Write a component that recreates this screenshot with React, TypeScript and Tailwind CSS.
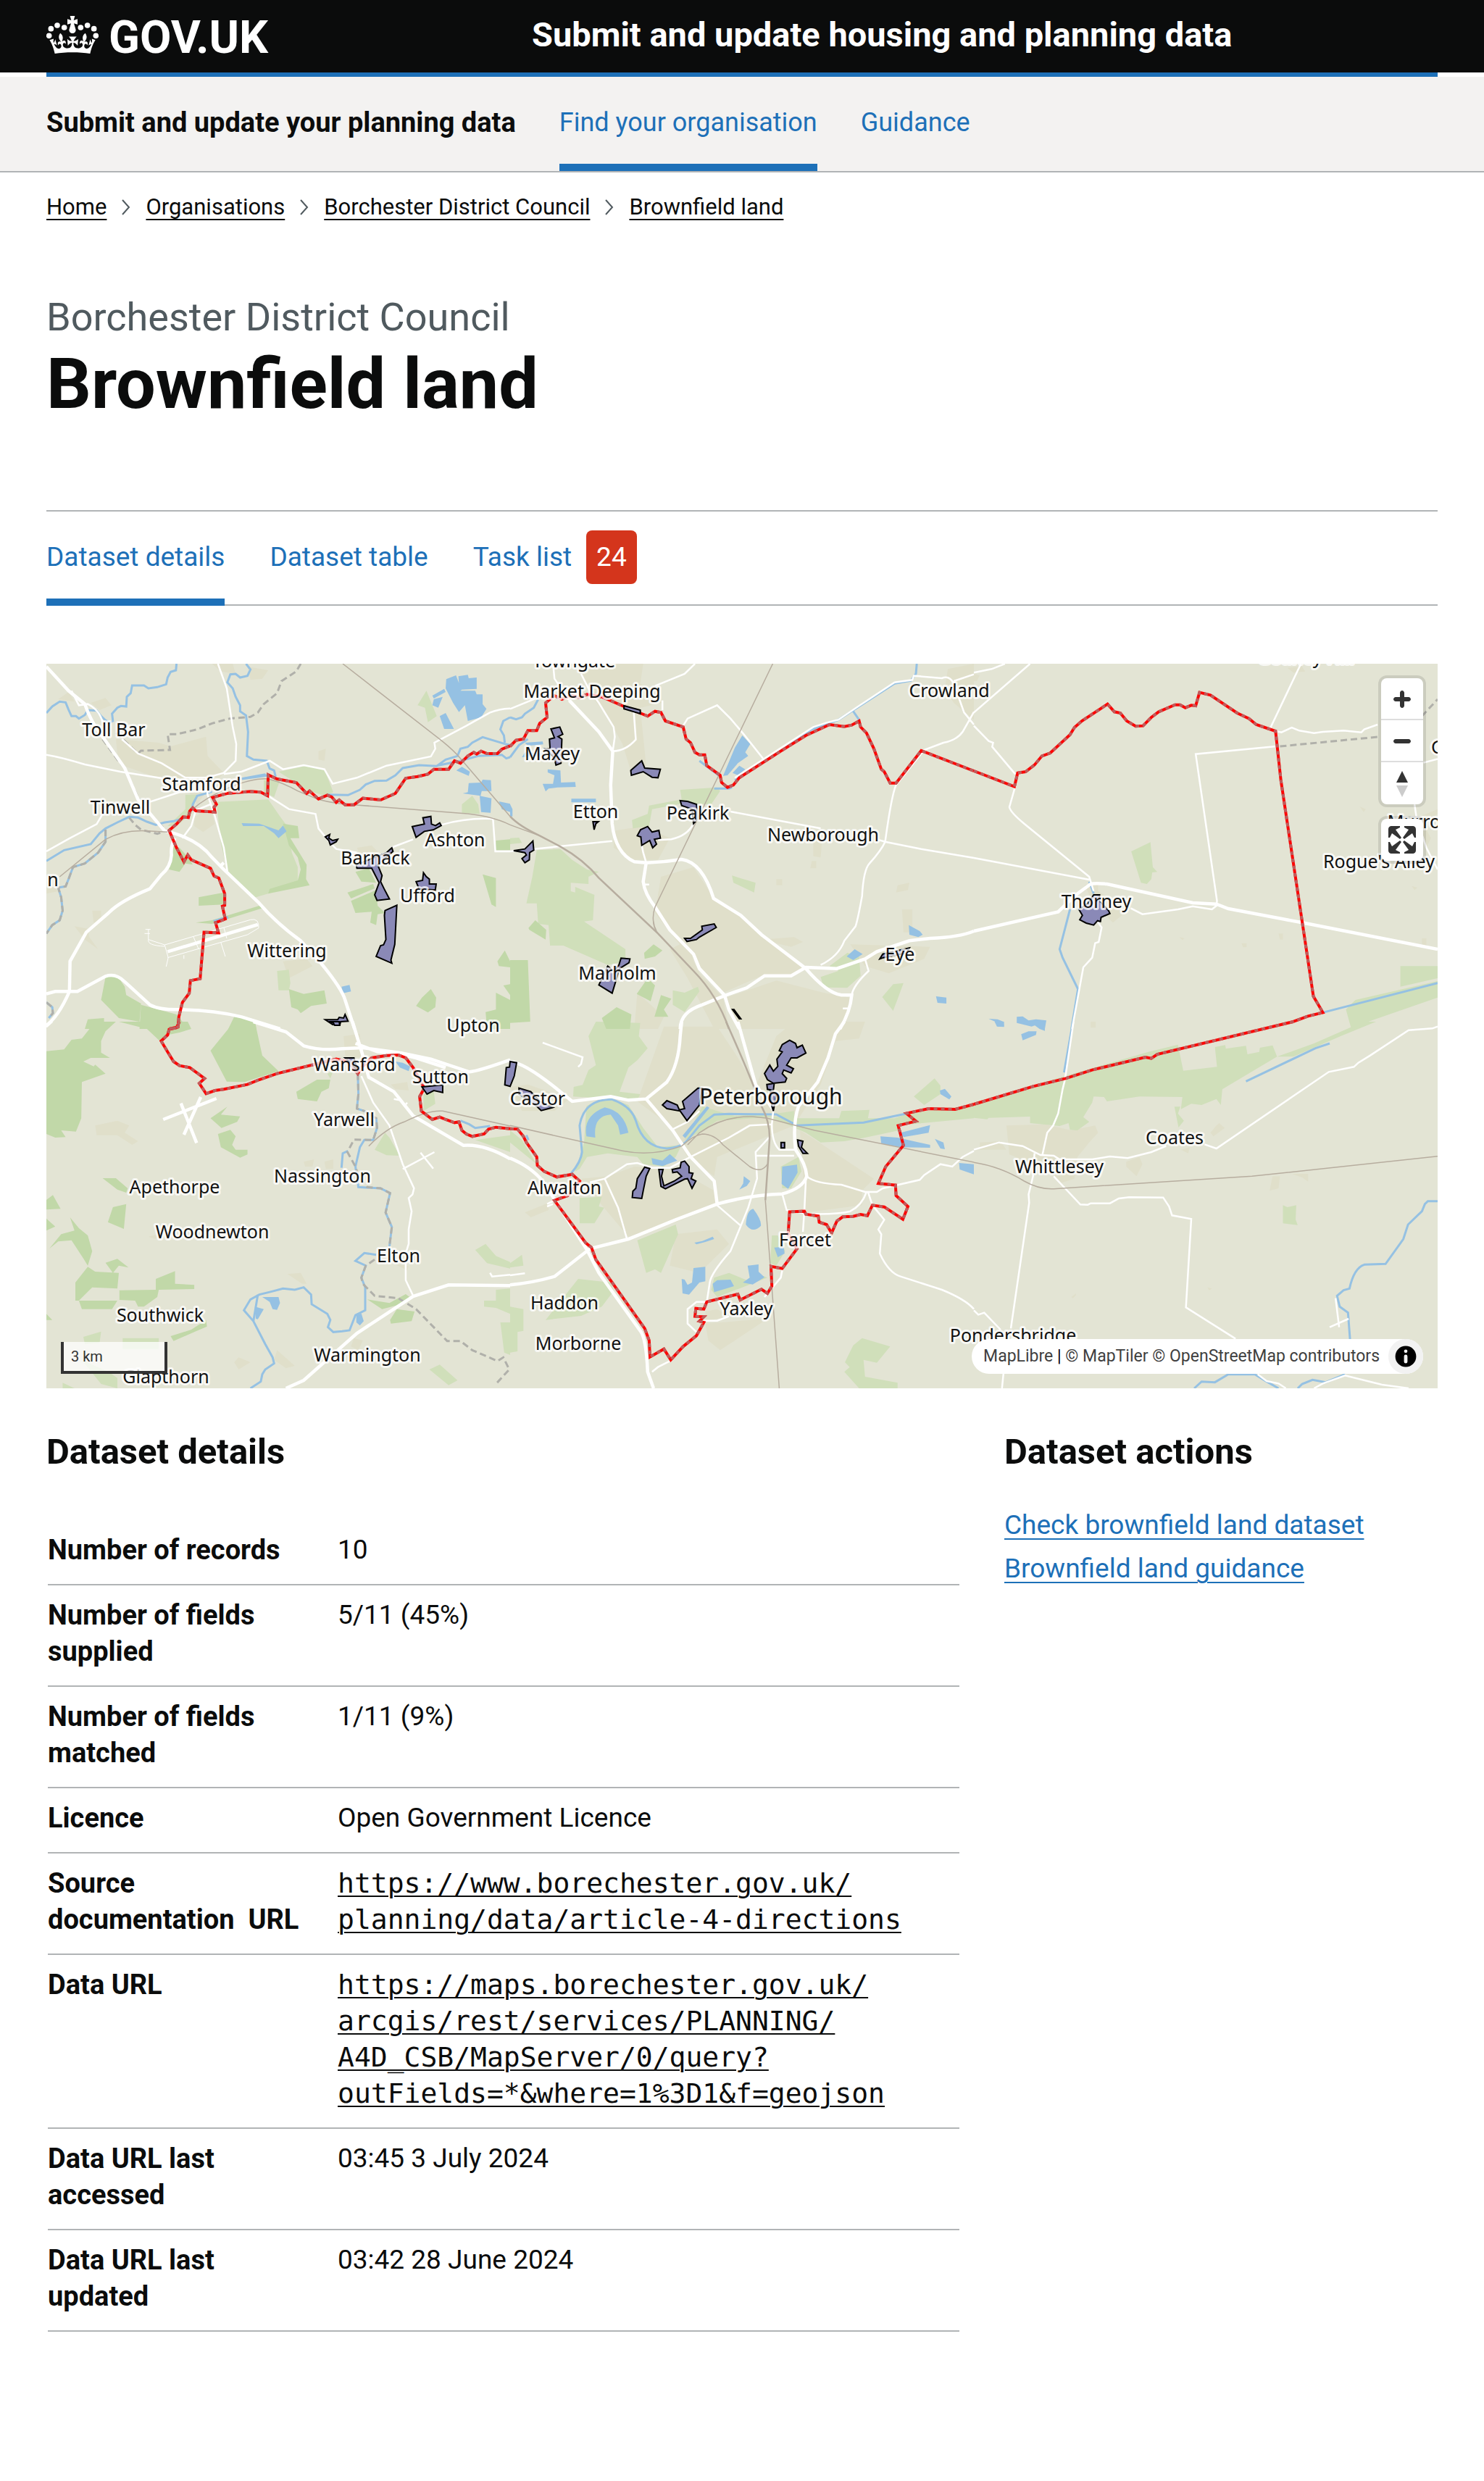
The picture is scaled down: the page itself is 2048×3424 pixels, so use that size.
import type { ReactNode } from "react";

/* ---------- shared ---------- */

const WRAP = "px-16";
const H2 = "text-[49px] leading-[60px] font-bold";

/* ---------- header ---------- */

function Crown() {
  return (
    <svg viewBox="24 24 216 156" className="h-[52px] w-[72px]" fill="currentColor" aria-hidden="true">
      {[[35, 106], [43, 77], [69, 63], [98, 72], [166, 72], [194, 63], [221, 77], [229, 106]].map(([x, y]) => (
        <circle key={x} cx={x} cy={y} r="11.5" />
      ))}
      <path d="M122 24h20l-5 18 16-5v22l-15-4 8 27a14 14 0 1 1-28 0l8-27-15 4V37l16 5z" />
      <path
        transform="matrix(5.94 0 0 6.36 37 -10.8)"
        d="M16 29.2c4.4 0 8.6.3 12.3.8 1.1-4.5 2.4-7 3.7-8.8l-2.5-.9c.2 1.3.3 1.9 0 2.7-.4-.4-.8-1.1-1.1-2.3l-1.2 4c.7-.5 1.3-.8 2-.9-1.1 2.5-2.6 3.1-3.5 3-1.1-.2-1.7-1.2-1.5-2.1.3-1.2 1.5-1.5 2.1-.1 1.1-2.3-.8-3-2-2.3 1.9-1.9 2.1-3.5.6-5.6-2.1 1.6-2.1 3.2-1.2 5.5-1.2-1.4-3.2-.6-2.5 1.6.9-1.4 2.1-.5 1.9.8-.2 1.1-1.7 2.1-3.5 1.9-2.7-.2-2.9-2.1-2.9-3.6.7-.1 1.9.5 2.9 1.9l.4-4.3c-1.1 1.1-2.1 1.4-3.2 1.4.4-1.2 2.1-3 2.1-3h-5.4s1.7 1.9 2.1 3c-1.1 0-2.1-.2-3.2-1.4l.4 4.3c1-1.4 2.2-2 2.9-1.9-.1 1.5-.2 3.4-2.9 3.6-1.9.2-3.4-.8-3.5-1.9-.2-1.3 1-2.2 1.9-.8.7-2.3-1.2-3-2.5-1.6.9-2.2.9-3.9-1.2-5.5-1.5 2-1.3 3.7.6 5.6-1.2-.7-3.1 0-2 2.3.6-1.4 1.8-1.1 2.1.1.2.9-.3 1.9-1.5 2.1-.9.2-2.4-.5-3.5-3 .6 0 1.2.3 2 .9l-1.2-4c-.3 1.1-.7 1.9-1.1 2.3-.3-.8-.2-1.4 0-2.7L0 21.2c1.3 1.8 2.6 4.3 3.7 8.8 3.7-.5 7.9-.8 12.3-.8"
      />
    </svg>
  );
}

function Header() {
  return (
    <header>
      <div className={`flex h-[100px] items-center bg-[#0b0c0c] pb-1 text-white ${WRAP}`}>
        <a href="#" className="flex w-[670px] shrink-0 items-center gap-[14px]">
          <Crown />
          <span className="pt-1.5 text-[63px] leading-none font-bold">GOV.UK</span>
        </a>
        <a href="#" className="text-[47px] leading-[60px] font-bold">Submit and update housing and planning data</a>
      </div>
      <div className={WRAP}>
        <div className="h-1.5 bg-[#1d70b8]" />
      </div>
      <nav aria-label="Service" className={`flex gap-[60px] border-b-2 border-[#b1b4b6] bg-[#f3f2f1] ${WRAP}`}>
        <a href="#" className="h-[130px] pt-[38px] text-[38px] leading-[50px] font-bold">Submit and update your planning data</a>
        <a href="#" aria-current="page" className="h-[130px] border-b-10 border-[#1d70b8] pt-[38px] text-[36px] leading-[50px] text-[#1d70b8]">Find your organisation</a>
        <a href="#" className="h-[130px] pt-[38px] text-[36px] leading-[50px] text-[#1d70b8]">Guidance</a>
      </nav>
    </header>
  );
}

function Breadcrumbs() {
  const items = ["Home", "Organisations", "Borchester District Council", "Brownfield land"];
  return (
    <nav aria-label="Breadcrumb" className="mt-7">
      <ol className="flex items-center text-[31px] leading-10">
        {items.map((t, i) => (
          <li key={t} className="flex items-center">
            {i > 0 && (
              <svg viewBox="0 0 12 22" className="mx-[21px] h-[22px] w-3" fill="none" stroke="#505a5f" strokeWidth="2" aria-hidden="true">
                <path d="M1 1l9 10-9 10" />
              </svg>
            )}
            <a href="#" className="underline decoration-2 underline-offset-[6px]">{t}</a>
          </li>
        ))}
      </ol>
    </nav>
  );
}

function Tabs() {
  const tab = "h-[130px] border-b-10 pt-1.5 flex items-center";
  return (
    <nav aria-label="Dataset" className="mt-[124px] flex h-[132px] gap-[62px] border-y-2 border-[#b1b4b6] text-[37px] leading-[50px] text-[#1d70b8]">
      <a href="#" aria-current="page" className={`${tab} border-[#1d70b8]`}>Dataset details</a>
      <a href="#" className={`${tab} border-transparent`}>Dataset table</a>
      <a href="#" className={`${tab} gap-5 border-transparent`}>
        Task list
        <span className="rounded-lg bg-[#d4351c] px-[14px] py-3 text-white">24</span>
      </a>
    </nav>
  );
}

/* ---------- map ---------- */

type Kind = "built" | "grass" | "wood" | "water" | "river" | "track" | "rail" | "railMain" | "minor" | "road" | "trunk" | "site" | "border";
type Sheet = { at: [number, number]; shapes: Partial<Record<Kind, string>> };

// Map sheets: three across, two down; each is drawn on its own 1568-unit wide grid.
const SHEETS: Sheet[] = [
  {
    at: [0, -6],
    shapes: {
      built: "M235 330L380 345 420 360 540 320 545 400 600 470 540 550 510 600 480 545 400 500 260 440 240 390ZM150 180L200 160 220 190 180 210ZM40 165L75 135 95 175ZM500 650L555 620 570 680 530 715 500 690ZM560 18H630L640 60 590 50ZM680 30L750 45 730 80 690 85ZM800 1250L880 1240 900 1270 820 1320ZM95 1105L140 1115 145 1150 175 1200 130 1160ZM155 1040H185V1090H160ZM1050 780L1100 770 1170 860 1080 860ZM920 380L945 370 940 420 920 415ZM0 920L40 960 0 970Z",
      grass: "M575 590L750 580 790 650 820 700 830 800 850 860 850 920 750 970 700 988 650 930 610 870 590 760ZM785 465L880 440 940 455 970 550 940 565 880 540 830 500ZM735 500L790 500 770 570 735 550ZM470 560L510 560 490 640 440 690 410 690 470 620ZM1255 190L1285 130 1320 235 1290 260 1280 200ZM1405 600L1440 565 1460 600 1465 640 1405 635ZM780 1290L820 1285 825 1340 820 1370 785 1370Z",
      wood: "M800 680L850 690 855 740 825 740 880 850 878 910 890 935 750 970 755 950 850 915 860 870 850 820 820 770ZM425 770L450 780 480 820 495 850 470 845 450 880 415 870ZM515 985L600 965 600 1015 515 1020ZM505 1090L560 1080 720 1020 735 1028 560 1095ZM200 1315L240 1310 265 1355 270 1390 320 1425 315 1500 245 1485 185 1410ZM320 1430L440 1470 480 1530 315 1530ZM140 1490L195 1485 195 1530 130 1530ZM635 1480L705 1495 710 1530H615ZM820 1365L870 1385 940 1370 948 1425 895 1435 860 1465 850 1450 828 1440ZM1045 880L1090 865 1115 925 1065 920ZM1018 965L1105 930 1110 948 1030 990ZM1030 1000L1115 955 1120 1020 1145 1050 1120 1055 1115 1100 1095 1090 1100 1045 1045 1050ZM1475 890L1520 905 1520 1025 1505 1015ZM1525 1250L1550 1205 1568 1250V1275L1530 1270ZM1250 1435L1270 1400 1300 1365 1318 1400 1315 1440 1290 1462ZM1520 1380L1568 1410V1530H1490L1485 1460 1520 1450ZM1520 750L1568 745V790H1520ZM1545 1350L1568 1345V1390Z",
      water: "M1352 82L1385 66 1395 98 1393 70 1425 64 1428 78 1455 75 1455 122 1405 125 1400 130 1450 130 1455 145 1475 145 1475 185 1488 205 1470 240 1425 255 1415 190 1395 218 1375 180 1350 120ZM1305 150L1345 122 1350 135 1310 162ZM1310 165L1340 155 1325 200 1305 190ZM1330 235L1350 222 1378 288 1345 288ZM1386 460L1405 445 1432 465 1428 482ZM1408 555L1425 550 1428 512 1470 510 1475 498 1503 500 1505 545 1472 545 1468 565 1440 560ZM1465 565L1505 575 1502 635 1470 632ZM1530 588L1568 598V632L1540 620ZM660 678L720 680 785 708 800 688 812 712 785 740 770 720 735 690 665 690ZM998 1355L1025 1348 1030 1375 1003 1382ZM563 1080L612 1062 616 1072 570 1092ZM660 490L740 472 745 484 670 496Z",
      river: "M0 222L20 195 45 175 65 178 75 208 85 235 100 235 110 245 130 230 140 210 170 212 185 235 200 252 215 262 225 255 222 225 240 200 252 193 270 195 272 155 285 140 290 108 330 108 345 120 375 115 405 103 410 75 420 52 438 45 440 18M675 18L690 42 680 68 655 75 640 60 622 62 612 95 630 120 640 155 655 190 655 215 675 232 682 300 678 400 700 415 745 420 755 452 770 460 775 485M660 495L750 480M492 628L495 600 510 565 560 548M470 655L430 670 400 675 370 685 340 672 310 655 280 652 240 675 200 700 180 720 150 765 60 790 0 835M200 705L200 755 175 800 130 845 90 860 75 910 65 940 40 945 50 985 55 1040 45 1080 20 1100 0 1135M0 1420L20 1440 22 1465 8 1485M950 560L1020 562 1060 540 1080 518 1110 503 1150 502 1180 480 1205 450 1260 438 1320 442 1350 415 1390 400 1400 370 1425 362 1440 345 1475 322 1550 350 1568 355M1550 345L1547 315 1535 290 1545 255 1568 240M1320 440L1400 420 1460 400 1540 395 1555 410 1568 405",
      track: "M190 330L240 415 265 450 320 600 405 710M860 18L845 50 795 90 780 140 735 185 715 220 690 238 620 245 560 265 510 290 440 310 410 310 418 375 320 378 310 390 228 295M280 655L300 685 320 705 375 722 405 710M200 705L200 755 175 800 130 845 90 860 75 910 65 940 40 945 50 985 55 1040 45 1080 20 1100 0 1135M0 1420L20 1440 22 1465 8 1485",
      rail: "M1002 18L1340 340Q1380 380 1400 410L1568 650M45 900L200 745Q260 705 340 710L410 715M490 625Q540 570 620 530 700 490 750 495 800 510 850 545L920 580Q980 600 1040 602L1400 637Q1500 645 1568 685",
      minor: "M345 1160L400 1182 690 1078Q720 1070 718 1112L680 1140 410 1235M345 1160Q340 1185 400 1188M405 1272L412 1235 400 1182M590 1172L605 1230M497 1148L515 1200M600 1110L610 1155M345 1160V1118M335 1118H352M332 1135H350M465 1225V1240",
      road: "M0 395Q50 405 130 435L250 465 390 492 480 500M85 130L110 190 140 185Q180 210 190 260M255 330L310 390 390 430 470 490 540 490M580 18L610 120 630 280 642 350 640 420 600 470 540 490 545 560 570 650 600 780 612 878M600 475L660 465 755 420 800 455 870 438 940 455 968 515 1050 490 1150 440 1300 402 1315 370 1312 345 1420 275 1500 220Q1530 205 1568 203M0 795L80 740 170 682 200 620M350 590L450 550 540 545M750 565L820 620 910 640 920 700 960 760 980 785 1050 800M1165 780L1240 745M1335 685Q1420 655 1510 660L1518 795H1568M555 600L505 625 490 690 460 740",
      trunk: "M0 30L75 130 130 185Q150 260 190 320L265 450 310 580 400 710Q510 740 560 820L600 870 720 1010Q780 1095 860 1165L930 1260Q1000 1365 1010 1410L1042 1530M435 740Q420 770 423 810 420 860 390 890L350 950Q250 1000 210 1050L135 1130 80 1250 78 1375Q40 1480 0 1515M0 1385L30 1375H105L200 1312Q235 1298 265 1335L350 1430Q380 1450 440 1450 560 1450 660 1480L790 1530M410 1210L715 1098M585 860L600 842",
      site: "M1237 692L1278 682 1273 656 1300 650 1302 682 1316 688 1330 677 1335 688 1308 706 1278 712 1250 737ZM1050 865L1048 850 1090 830 1150 800 1168 780 1172 795 1120 850 1135 895 1130 920 1142 950 1160 992 1118 998 1110 975 1125 925 1100 865ZM1145 1040L1185 1018 1178 1180 1165 1245 1168 1258 1115 1230 1130 1185 1140 1182 1148 1160 1143 1060ZM943 735L958 725 955 740 968 750 985 745 980 755 960 768 955 750ZM1250 920L1272 915 1275 883 1285 900 1295 910 1295 930 1318 930 1315 955 1260 950ZM943 1492L985 1492 990 1482 1005 1485 1010 1470 1020 1498 995 1500 992 1515 968 1512Z",
      border: "M415 1530L445 1522 448 1480 460 1420 483 1382 487 1330 520 1322 533 1130 582 1132 572 1090 605 1075 595 1022 603 1018 603 970 583 905 567 897 555 865 490 830 478 810 465 838 440 780 415 708 440 682 462 652 480 655 485 628 495 615 505 627 570 632 567 612 575 600 562 572 610 555 690 547 725 550 748 565 750 478 780 495 845 510 880 555 890 545 920 578 950 562 965 570 980 592 990 582 1010 602 1040 602 1070 575 1130 582 1180 555 1215 492 1255 485 1290 475 1310 455 1360 455 1380 420 1400 430 1425 400 1445 385 1455 392 1470 380 1490 390 1525 390 1540 372 1568 358",
    },
  },
  {
    at: [640, -6],
    shapes: {
      built: "M510 900L620 860 690 990 790 1070 850 1140 990 1270 960 1310 850 1310 720 1380 640 1270 560 1160 490 1050ZM730 1400L900 1330 1060 1380 1150 1400 1150 1440 1110 1530H770ZM220 18H450L440 100 515 180 440 200 460 440 410 470 380 350 330 240 280 160ZM1480 40L1568 18V250L1500 180 1470 120ZM350 710L450 690 540 740 500 830 420 830 350 780ZM590 1170L640 1300 720 1400 740 1530H690L600 1320 540 1200ZM1150 1180L1420 1190 1400 1240 1280 1300 1200 1270ZM960 1150L990 1170 950 1190 850 1160ZM1325 1035H1360V1130H1330ZM1310 935L1350 925 1345 955 1305 965ZM1025 745H1055L1050 820 1025 815ZM1020 835H1035V865H1015ZM900 910H920V935H900ZM430 1380L520 1480 500 1530H420Z",
      grass: "M90 790L170 785 210 830 260 870 300 880 265 900 265 930 205 925 205 960 220 965 220 942 285 975 280 1080 250 1085 390 1200 390 1250 330 1265 180 1185 135 1185 130 1100 95 1095 90 1010 55 1010 75 900ZM575 540L700 530 710 545 680 600 580 598 480 620 470 690 415 700 412 665 465 640 470 605 580 580ZM750 895L830 925 825 965 755 925ZM1080 1270L1140 1215 1180 1230 1185 1310 1140 1360 1060 1358 1050 1315 1110 1290ZM1295 1345L1330 1340 1312 1400 1295 1455 1258 1398ZM550 1370L590 1380 635 1355 640 1375 590 1460 550 1430ZM0 740L30 738 40 760 0 765Z",
      wood: "M0 1245L60 1245 68 1500 0 1505ZM62 1112L85 1080 122 1120 120 1160 65 1120ZM453 1215L485 1180 515 1205 490 1230 455 1240ZM428 1385L465 1320 490 1350 475 1415ZM510 1390L545 1405 520 1450 535 1480 488 1480ZM310 1485L360 1440 410 1470 405 1530H325Z",
      water: "M720 482L760 365 785 315 812 350 795 385 805 400 770 430 735 480ZM752 470L775 440 795 455 770 480ZM127 455L170 460 172 510 220 508 222 528 160 530 130 535 120 547 110 515 145 515 150 480 127 468ZM207 577H290V592H207ZM50 345L110 340 112 352 60 358ZM40 405L50 385 110 390V400ZM1138 1230L1165 1200 1192 1220 1160 1245ZM1348 1100L1385 1125 1395 1140 1380 1150 1350 1140ZM1440 1395L1475 1400 1475 1425 1445 1422ZM0 600L8 620V650H0Z",
      river: "M0 240L20 248 40 240 50 225 80 200 95 165M0 405L30 355 60 330M640 420L710 485M690 535L740 535 750 530M760 500L920 375 1020 290 1110 250 1300 100 1355 88 1372 60 1375 18M1160 215L1180 250",
      rail: "M888 18L490 1025Q475 1080 495 1125M0 685L100 730M484 1080Q484 1110 500 1135",
      railMain: "M0 650Q30 690 100 730L170 775Q250 830 300 905L500 1135 620 1290Q700 1390 740 1530",
      road: "M145 18L150 80 200 170M240 60L265 120 300 180 350 280 354 320 347 380Q390 380 425 332L418 215M0 205L100 155M490 110L590 60 625 18M515 170L515 210M585 275L600 245 700 190 745 245 790 310 855 410M760 490L1025 280 1070 262 1110 250 1170 200 1300 95 1360 85 1365 68 1460 78Q1485 65 1500 100L1535 220 1568 270M1500 90L1568 62M745 630L1050 700M1240 745L1268 755 1390 785 1568 822M0 795L345 752M445 770L450 800 460 842M500 748L545 745Q600 730 620 680M1200 1240L1212 1290Q1160 1350 1155 1390M1568 218L1530 300Q1510 335 1465 345L1400 375 1305 520Q1290 560 1268 755 1255 790 1215 845 1195 870 1190 980 1175 1080 1168 1105L1130 1165Q1110 1230 1050 1265M450 932H470M1125 1445H1145",
      trunk: "M200 170L300 300 347 380 340 520 345 680Q355 800 420 838L460 842Q520 840 580 828 650 840 688 990L780 1060 850 1140 1000 1280Q1070 1380 1120 1390H1155Q1150 1460 1115 1530M460 842L450 920Q455 970 490 1025L540 1120 620 1220 640 1280 725 1390 740 1450 775 1530M575 1530Q575 1460 650 1430L730 1390 800 1360 860 1310 950 1310 1000 1275 1105 1280 1200 1240 1240 1210 1350 1165 1420 1155Q1520 1150 1568 1125",
      site: "M138 288L168 280 178 310 162 320 175 330 172 430 155 438 150 410 118 370 135 370 133 330 150 325ZM408 460L445 420 455 450 508 455 500 490 480 488 450 465 410 480ZM385 192L440 210 440 225 385 205ZM575 585L600 588 630 600 635 660 620 680 615 620 580 605ZM280 672H298L290 680 284 705ZM430 730L441 705 465 692 480 715 503 708 508 740 488 745 495 765 482 780 472 750 445 770 442 735ZM12 792L50 785 77 752 80 790 66 800 65 830 50 842 40 825 55 810 50 800ZM590 1155L610 1155 650 1120 648 1105 690 1095 697 1110 640 1150 630 1160 598 1168ZM300 1348L330 1270 350 1290 368 1265 375 1237 405 1240 402 1256 370 1280 345 1382ZM752 1450L757 1450 780 1488 775 1488ZM1250 1240L1260 1220 1350 1195 1340 1215 1262 1235Z",
      border: "M0 360L20 335 45 330 60 295 90 295 100 265 125 240 120 180 150 150 175 165 205 150 235 158 260 145 310 155 385 195 465 235 490 215 510 220 525 255 585 280 595 330 610 345 625 385 640 395 658 395 665 440 710 480 715 510 735 530 755 520 775 490 915 380 1000 315 1080 270 1130 278 1155 272 1180 255 1185 280 1205 305 1230 370 1255 455 1265 465 1285 512H1305L1390 378 1568 462",
    },
  },
  {
    at: [1280, -6],
    shapes: {
      built: "M0 60L20 65 10 90 0 90ZM375 935L420 925 420 960 500 1020 530 1030 470 1090 400 1000ZM1060 35L1110 30 1120 50 1080 55ZM1500 655L1568 620V640L1520 680 1545 740 1530 780ZM1305 610L1325 620 1318 632ZM1480 938L1500 945 1490 955ZM695 1150L712 1155 705 1162ZM905 1175H922V1192H910ZM1030 1135H1045V1160H1035ZM1515 1155H1530V1185H1515ZM395 1500H412V1525H395Z",
      grass: "M532 795L597 757 605 860 620 880 603 882 600 910 585 930 565 925ZM1442 1270H1568V1320L1442 1355ZM1290 1410L1568 1332V1400L1275 1525 1258 1450Z",
      water: "M50 1488L80 1490 100 1500 102 1522 80 1520 72 1500ZM145 1480L165 1478 185 1495 210 1490 245 1495 240 1530 225 1528 220 1510 195 1520 145 1505Z",
      river: "M390 920L405 970M325 1035L290 1200 300 1235 352 1365 330 1530M1180 1462L1568 1340",
      track: "M1035 360L1375 320M1515 235L1568 165",
      road: "M0 220L190 18M0 275L50 338 65 345 62 362 140 475M140 525L120 612Q125 635 170 680L200 710 390 900 405 960M1002 285L1105 20M1020 297L1040 302 1075 282 1100 295 1150 305 1180 300 1250 295 1310 302 1320 290 1365 270M1022 360L750 392 822 1000 820 1020 805 1035 740 1022 690 1035 570 1055 530 1030M0 822L390 912M415 1080L432 1110 422 1170 410 1175 400 1235 370 1275 332 1530M1490 600L1497 660 1530 780 1568 870M1520 428L1568 412M0 55L60 40 105 18",
      trunk: "M0 1125L285 1045 345 975 395 930Q410 925 450 930L740 1008 820 1013 860 1032 1110 1090 1568 1200",
      site: "M405 975H425V1000L455 1040 460 1052 430 1068 428 1085 418 1082 405 1100 380 1092 358 1078 367 1060 355 1035 385 1010Z",
      border: "M0 462L137 527 148 470 175 465 205 437 230 400 258 388 325 312 340 282 365 255 452 185 475 217 495 222 517 255 547 277 572 275 600 240 625 217 680 188 697 188 715 200 735 190 750 192 763 137 800 148 890 222 930 245 955 270 1020 297 1038 500 1148 1395 1180 1462 1130 1477 1080 1500",
    },
  },
  {
    at: [0, 494],
    shapes: {
      built: "M165 430L240 410 280 430 265 460 310 495 290 510 240 470 170 470ZM870 580L905 570 900 600 875 600ZM940 580L970 570V610H945ZM815 1045L860 1040 880 1085 865 1085ZM1005 60L1060 50 1065 150 1010 140ZM1165 260L1220 250 1225 285 1180 280ZM635 1410L650 1390 690 1410 650 1440ZM780 1360L840 1425 810 1435 770 1400ZM1040 1310L1070 1320 1055 1360 1030 1345ZM345 890L380 880 370 900ZM1180 1005L1225 1010 1220 1030Z",
      grass: "M1110 530L1145 460 1160 480 1195 555 1150 553ZM1275 300L1310 290 1315 340 1275 370ZM1450 945L1485 920 1520 970 1568 995V1022L1490 1000ZM1480 1155L1520 1155 1520 1110 1568 1105V1210L1520 1185 1480 1180ZM1535 1245H1568V1380L1548 1370ZM1295 1440L1330 1420 1390 1485 1360 1505ZM1450 490L1568 470V540ZM125 1305L185 1283 180 1330 130 1335ZM258 1310H380V1355H258ZM120 1400L210 1450 240 1475 240 1518 185 1500ZM55 1495L95 1518H55ZM950 215L970 205 960 235Z",
      wood: "M0 122L60 115 85 75 120 70 165 0H235L200 40 185 80 185 128 215 150 150 150 125 165 160 185 165 178 200 215 120 250 118 400 100 455 50 450 65 478 30 480 0 465ZM245 0H478L490 30 450 45 410 55 385 82 340 30ZM555 120L635 0H705L730 140 785 205 670 250 610 248ZM845 290L915 240 960 240 955 275 930 290 915 330 850 320ZM555 400L612 352 590 385 655 392 645 415 592 440ZM580 465L622 448 640 475 628 510 640 530 680 530V550L655 563 590 520ZM190 648L235 648 275 690 270 708 240 695ZM0 738L22 718 48 775 0 778ZM225 768L270 755 262 858 208 830ZM80 810L110 855 140 885 155 950 140 1010 125 980 85 905 40 910 10 940 50 880 95 865ZM98 1080L140 1015 165 1035 245 1040 240 1105 155 1100 110 1155H98ZM200 998L240 982 278 1018 245 1010 225 1040ZM110 1155L240 1155 222 1190 120 1190ZM247 1112L370 1110 370 1065 435 1033 435 1085 500 1090V1107L380 1110 375 1140 330 1180 310 1180 300 1155 247 1152ZM420 1302L490 1275 540 1235 543 1262 500 1285 430 1322ZM0 815L30 848 0 865ZM0 1210L20 1235H0ZM1085 1150L1160 1165 1215 1128 1228 1140 1215 1165 1135 1190ZM1162 1235L1185 1190 1245 1200 1235 1240 1165 1250Z",
      water: "M730 1140L785 1140 790 1165 780 1193 765 1190 755 1160ZM708 1230L705 1180 735 1190 715 1232ZM1048 1215L1065 1208 1073 1240 1060 1258 1048 1245ZM1180 165L1205 170 1230 185 1225 205 1195 190Z",
      river: "M690 1518L725 1490 730 1460 740 1440 770 1415 765 1390 740 1335 700 1240 668 1195 690 1150 720 1130 760 1118 800 1105 840 1110 870 1100 895 1130 897 1170 950 1210 960 1235 952 1265 970 1285 1000 1282 1025 1278 1045 1215 1078 1195 1078 1100 1065 1060 1080 1010 1045 990 1075 958 1115 965M715 1130L700 1240M1160 930L1168 850 1147 790 1162 710 1130 690 1055 685 1045 600 1060 520 1075 490 1105 490 1118 440 1115 400 1075 370 1050 360 1055 300 1053 215M998 605L1002 545 1020 535M1400 410L1430 425 1450 440 1500 432",
      track: "M1053 215L1055 300 1050 360 1075 370 1115 400 1118 440 1105 490 1040 488 1018 540 1045 600 1055 640 1085 685 1130 690 1162 710 1147 790 1168 850 1160 930M1110 985L1080 1010 1065 1060 1070 1085 1110 1135 1190 1145 1250 1190 1355 1322 1400 1322 1440 1360 1525 1405 1545 1390 1565 1440 1520 1500",
      rail: "M1090 515Q1150 440 1210 415 1290 365 1340 370L1568 432",
      road: "M1065 225L1105 335 1160 430 1205 590 1243 690 1238 715 1225 730 1235 785 1225 860 1225 920 1215 960V1070L1240 1135M1205 610L1312 540M1265 542L1308 608M1500 1040L1507 1055 1568 1048M1175 320L1195 325M1210 350L1220 335M0 22L20 0",
      trunk: "M700 0L810 42 870 100Q930 122 1000 112L1070 108 1200 130 1300 155 1430 208Q1460 205 1568 158M1035 0L1065 120 1090 230 1175 290 1240 390 1410 512Q1480 505 1568 568M1045 90L1120 125 1200 135 1250 150 1350 190M810 1518L870 1485 1050 1290 1240 1137 1360 1090 1568 1093M395 405L575 318M455 338L508 502M522 312L465 468",
      site: "M1270 270L1340 262 1340 293 1310 285 1287 300ZM1568 165L1590 170 1582 225 1568 268 1550 262 1555 190 1566 188ZM955 0H990L992 15 975 15 970 5ZM1010 150L1040 150 1052 205 1030 170Z",
      border: "M450 0L440 25 415 32 410 55 388 80 410 125 430 165 450 182 485 190 535 235 517 255 540 298 570 285 600 280 680 260 720 240 780 215 980 155 1020 165 1053 215 1065 190 1100 150 1150 140 1190 138 1215 150 1240 190 1278 275 1262 310 1268 370 1305 405 1330 395 1350 405 1380 418 1395 415 1405 450 1420 465 1440 475 1480 465 1495 445 1520 437 1568 443",
    },
  },
  {
    at: [640, 494],
    shapes: {
      built: "M240 650L330 640 420 600 560 610 690 700 700 760 560 830 400 890 310 760ZM430 330L520 20H700L760 130 830 270 900 60 960 0H1200L1180 70 1100 80 1050 260 960 430 700 560 690 640 600 560 540 430ZM980 450L1020 480 1230 650 1190 700 1190 760 1000 790ZM560 880L700 860 740 920 640 1040 540 1010ZM660 1250L870 1230 760 1320 710 1360 670 1320ZM50 790L130 750 130 780 70 810ZM0 270L60 260 200 320 150 370 40 370ZM660 1200L700 1190 740 1220 660 1240Z",
      grass: "M290 0L440 5 435 60 465 110 430 160 400 190 370 290 440 300 430 325 240 312 213 310 215 270 245 262 265 200 290 180 265 60ZM258 350Q320 300 400 345L450 440 500 520 580 510 560 560 520 600 450 590 430 560 330 545 260 560 235 610 220 620 250 500ZM590 490L650 350 700 370 760 390 830 385 960 400 1300 400 1345 380 1568 345V400L1310 430 1315 450 1200 480 1130 495 1050 500 1000 460 880 395 700 410 640 460ZM900 380L960 370 960 420ZM1120 370L1215 365 1210 400 1110 410ZM430 905L560 840 568 880 510 1040 490 1025 460 1040ZM235 730L310 725 300 765 318 770 285 835 235 835ZM0 450L40 490 90 590 60 560 0 500ZM680 1110L690 1060 740 1040 800 1070 850 1050 870 1060 700 1140ZM915 600L975 560 985 620 950 690 920 690ZM885 885H905L930 950 900 1010 880 1000ZM1365 310L1435 235 1455 265 1455 300 1400 345ZM1160 1340L1190 1310 1285 1345 1240 1412 1195 1400 1200 1470 1310 1495V1518H1180L1130 1450 1148 1430 1132 1410ZM0 1000L40 965 45 1010 0 1018ZM120 1235L230 1065 340 1080 350 1115 310 1180 240 1218ZM0 1180L45 1190 45 1280 25 1285 25 1365 0 1370ZM380 0L345 50 320 0Z",
      water: "M258 475Q245 390 320 355 385 370 400 460L372 468 365 430 340 385Q280 390 288 480ZM478 565L515 575 540 548 565 575 515 598 482 590ZM583 472L665 350 674 356 592 482ZM920 600L970 592 972 625 940 692 918 672ZM775 695L788 670 790 640 812 660 800 680ZM797 840Q800 780 822 775 850 820 848 845 820 880 797 840ZM623 915L650 908 685 890 690 900 660 912 630 922ZM580 1065L590 1068 600 1090 615 1080 620 1020 660 1015V1075L640 1080 605 1130 583 1125ZM685 1085L700 1070 745 1068 757 1095 690 1120ZM787 1080L810 1060 803 1010 840 1005 840 1035 860 1058 820 1088ZM893 935L925 932 928 960 905 975ZM1252 475L1310 480 1420 510V522L1320 520 1255 505ZM1320 460L1420 428 1415 460 1330 478ZM1436 485L1465 500 1470 528 1455 525ZM1453 285L1470 278 1492 310 1485 322 1455 300ZM1518 585L1568 590V632L1520 612Z",
      river: "M205 630Q240 580 243 540L235 430Q250 320 345 322 410 350 425 410 450 520 530 525 580 520 600 490L640 430 690 385 740 382 900 384 970 430 1195 418 1335 382M55 470L62 490",
      rail: "M0 430L380 535Q480 560 580 515 620 470 650 465 690 465 720 510L810 600Q850 630 870 590M600 510L640 460Q720 390 820 393L870 400 1030 450 1568 582M863 740L885 1100 910 1518",
      railMain: "M730 0Q800 190 850 350 880 420 877 490L863 740",
      road: "M110 87L245 147 240 175 230 187M550 445L600 415 640 370M610 560L740 480 810 430 885 425 890 365M885 425Q885 500 910 530H970M830 555L960 555M875 480L830 540 835 650 805 770 780 845 745 950Q680 1040 675 1080L665 1160H630L600 1190V1250L630 1285M700 760L780 845M270 665L320 650 395 590 430 585 480 605 540 605 610 560M320 650L365 770 395 900M1003 640Q1030 670 1120 675L1200 705 1240 705 1260 690 1385 655 1400 635 1455 590 1495 600 1530 560 1568 535M1000 650L995 780 990 870M920 713L935 780 1000 795Q1100 800 1150 785 1190 760 1205 705M1210 705L1225 760 1265 820 1245 860 1255 880 1250 960Q1280 1040 1320 1055L1460 1110Q1540 1150 1568 1190M920 1030L915 1060 860 1140M655 1238H700L740 1220M480 1450L500 1430 540 1405M0 1050L50 1042M125 755L150 740M125 765L145 755",
      trunk: "M0 165Q50 170 170 290L210 330 340 310 400 325 460 320 530 250Q570 180 575 60L580 0M460 320L550 450 610 560 690 660 700 755 560 820 400 900 270 940 150 1055Q80 1080 0 1090M700 755Q820 715 920 713 990 690 1003 640 1000 590 965 530 955 420 975 350L1040 250 1075 150 1100 50 1130 0M770 0L800 130 830 260 890 365M0 565Q70 600 110 660L155 745 260 945 300 1040 440 1280Q460 1310 465 1450L485 1518",
      site: "M920 95L945 77 965 90 970 108 988 97 1000 130 970 150 950 150 935 180 958 195 950 212 925 200 920 215 935 235 930 250 890 255 870 240 860 215 878 180 890 205 905 185 902 155 920 125 910 120ZM868 260L893 255 890 285 870 280ZM880 290L900 300 890 370 885 350ZM515 345L530 327 565 345 572 365 590 360 583 330 635 275 650 275 640 345 598 410 575 370 530 360ZM455 602L472 608 460 640 450 700 445 732 413 728 415 702 425 690 430 650ZM503 612L517 612 512 640 520 680 555 660 580 640 565 622 550 625 548 612 575 605 578 582 590 577 605 600 605 625 618 628 612 650 628 660 615 690 600 650 590 652 525 692 510 682ZM916 500H928V523H916ZM972 490L990 495 985 520 1005 545 990 545 975 515ZM30 275L70 290 100 330 145 355 105 368 90 350 30 300Z",
      border: "M0 443L25 445 45 475 55 500 90 560 92 595 115 620 158 643 210 632 235 660 195 720 150 740 255 915 275 935 290 985 455 1270 470 1320 473 1388 520 1355 543 1400 585 1345 630 1300 655 1245 640 1240 655 1222 625 1220 628 1187 655 1190 665 1160 770 1128 778 1152 850 1108 870 1125 885 1095 882 1013 920 1022 970 940 940 880 945 787 995 785 1000 797 1042 805 1045 830 1070 840 1087 875 1105 825 1125 808 1160 806 1185 798 1208 803 1225 760 1265 767 1328 818 1345 765 1305 720 1303 677 1245 670 1270 600 1330 512 1312 430 1372 412 1340 380 1415 360 1505 363 1568 342",
    },
  },
  {
    at: [1280, 494],
    shapes: {
      built: "M110 430L240 425 330 450 410 430 420 460 390 500 350 560 340 650 290 670 250 600 180 580 120 550ZM20 500L90 495 110 530H20ZM515 580L560 560 570 590 550 640 515 600ZM800 460L820 430 830 420 848 440 810 475ZM700 530L730 520 725 545ZM1010 640H1035L1030 690 1000 700ZM1075 630H1130V662L1110 645ZM330 1140L345 1125 345 1132 335 1145ZM790 1100L805 1105 795 1112Z",
      grass: "M0 335L590 125 690 95 708 203 822 187 815 105 850 97 852 112 920 100 925 135 965 125 967 108 1010 98 1025 145 840 280 835 345 820 320 770 345 735 340 700 362 705 312 560 310 450 330 440 312 405 310 400 335 370 395 390 415 350 450 325 448 320 420 290 432 190 420 190 393 50 398 45 404 0 398ZM678 352H698L690 380 710 410 692 438ZM1025 145L1150 90 1280 20 1270 0H1360L1240 60 1080 145ZM1045 760L1060 768 1090 760 1088 820 1095 842 1045 835Z",
      water: "M70 0H102V20H78ZM145 0H240V38L222 30 200 10 180 12ZM160 52L185 40H212L210 55 165 77Z",
      river: "M335 0L305 210M920 247L1155 110 1203 90M1568 743L1535 743 1525 755 1515 785 1468 840 1452 900 1392 1003 1320 1006Q1285 1020 1270 1105L1250 1112 1228 1135 1237 1180 1265 1205 1272 1318M745 1518L770 1490 815 1493 860 1460 950 1460 990 1490 1030 1518M1095 1518L1110 1500 1145 1483 1190 1493 1255 1460",
      rail: "M0 583Q90 600 170 660 220 695 270 692L940 640 1568 557",
      road: "M0 530L85 500 165 515 225 552 270 555 290 570 400 570 460 558 520 565 600 540 650 515M780 508L820 525 1200 208 1285 187 1300 170 1340 140 1470 35 1550 28 1568 20M337 0L308 240 300 280 285 380 268 430 248 460 232 550M205 545L200 640 185 715 187 750 125 1270M100 1458L95 1518M270 640L320 705 360 757 385 758 395 752 460 752 490 732 525 727 640 728 660 765 670 802 735 817 717 1183 885 1313M0 1195L15 1213 35 1205 90 1275M1223 1145L1235 1265M1203 1265L1267 1230M960 1460L990 1488 1030 1498 1055 1518M1150 1518L1180 1498 1255 1465 1380 1503 1470 1518",
      border: "M1080 0L620 135 600 152 580 147 400 200 310 235 200 268 0 342",
    },
  },
];

const STYLES: { kind: Kind; className: string; dash?: string }[] = [
  { kind: "built", className: "fill-[#e0dfca]" },
  { kind: "grass", className: "fill-[#d0dfba]" },
  { kind: "wood", className: "fill-[#c1d8a8]" },
  { kind: "water", className: "fill-[#95c1e3]" },
  { kind: "river", className: "fill-none stroke-[#95c1e3] stroke-[3px]" },
  { kind: "track", className: "fill-none stroke-[#b0b0aa] stroke-3", dash: "9 5" },
  { kind: "minor", className: "fill-none stroke-white stroke-[1px]" },
  { kind: "road", className: "fill-none stroke-white stroke-[2.5px]" },
  { kind: "trunk", className: "fill-none stroke-white stroke-[4.5px]" },
  { kind: "rail", className: "fill-none stroke-[#b7ad9f] stroke-[1.5px]" },
  { kind: "railMain", className: "fill-none stroke-[#b7ad9f] stroke-[2.5px]" },
  { kind: "border", className: "fill-none stroke-[#fb0605] stroke-4" },
  { kind: "border", className: "fill-none stroke-[#c05c5c] stroke-4", dash: "5 5" },
  { kind: "site", className: "fill-[#8a89b7] stroke-black stroke-2" },
];

const PLACES: [string, number, number][] = [
  ["Toll Bar", 93, 100], ["Stamford", 214, 175], ["Tinwell", 102, 207], ["Ashton", 564, 252], ["Barnack", 454, 277],
  ["Ufford", 526, 329], ["Wittering", 332, 405], ["n", 9, 307], ["Upton", 589, 508], ["Wansford", 425, 562],
  ["Sutton", 544, 579], ["Yarwell", 411, 638], ["Nassington", 381, 716], ["Apethorpe", 177, 731], ["Woodnewton", 229, 793],
  ["Elton", 486, 826], ["Southwick", 157, 908], ["Warmington", 443, 963], ["Glapthorn", 165, 993], ["Towngate", 728, 5],
  ["Market Deeping", 753, 47], ["Crowland", 1246, 46], ["Maxey", 698, 133], ["Etton", 758, 213], ["Peakirk", 899, 215],
  ["Newborough", 1072, 245], ["Eye", 1178, 410], ["Marholm", 788, 436], ["Castor", 678, 609], ["Alwalton", 715, 732],
  ["Farcet", 1047, 804], ["Yaxley", 966, 899], ["Haddon", 715, 891], ["Morborne", 734, 947], ["Pondersbridge", 1334, 936],
  ["Thorney", 1449, 337], ["Gedney Hill", 1738, 0], ["Murrow", 1897, 227], ["Rogue's Alley", 1839, 282], ["Guyhirn", 1958, 124],
  ["Coates", 1557, 663], ["Whittlesey", 1398, 703],
];

function MapDrawing() {
  return (
    <svg viewBox="0 0 1920 1000" preserveAspectRatio="xMidYMid slice" className="block h-full w-full bg-[#e3e4d4]" role="img" aria-label="Map of brownfield sites around Peterborough">
      {STYLES.map((s, i) => (
        <g key={i} className={s.className} strokeLinejoin="miter" strokeDasharray={s.dash}>
          {SHEETS.map((sheet, j) =>
            sheet.shapes[s.kind] ? (
              <path key={j} vectorEffect="non-scaling-stroke" transform={`matrix(.40816 0 0 .33333 ${sheet.at[0]} ${sheet.at[1]})`} d={sheet.shapes[s.kind]} />
            ) : null,
          )}
        </g>
      ))}
      <g textAnchor="middle" paintOrder="stroke" stroke="#fff" strokeOpacity="0.75" strokeWidth="6" strokeLinejoin="round" fill="#111" className="font-['Noto_Sans',sans-serif] text-[25px]">
        {PLACES.map(([name, x, y]) => (
          <text key={name} x={x} y={y}>{name}</text>
        ))}
        <text x={1000} y={608} className="text-[30px]">Peterborough</text>
      </g>
    </svg>
  );
}

function Control({ label, children }: { label: string; children: ReactNode }) {
  return (
    <button type="button" aria-label={label} className="block size-[58px]">
      <svg viewBox="0 0 29 29" className="size-[58px]" fill="#333" aria-hidden="true">{children}</svg>
    </button>
  );
}

function MapPanel() {
  const group = "rounded-lg bg-white shadow-[0_0_0_4px_rgba(0,0,0,0.1)]";
  return (
    <section aria-label="Map" className="relative mt-20 h-[1000px] overflow-hidden">
      <MapDrawing />
      <div className="absolute top-5 right-5 flex flex-col gap-5">
        <div className={`${group} divide-y-2 divide-[#ddd]`}>
          <Control label="Zoom in">
            <path d="M14.5 8.5c-.75 0-1.5.75-1.5 1.5v3h-3c-.75 0-1.5.75-1.5 1.5S9.25 16 10 16h3v3c0 .75.75 1.5 1.5 1.5S16 19.75 16 19v-3h3c.75 0 1.5-.75 1.5-1.5S19.75 13 19 13h-3v-3c0-.75-.75-1.5-1.5-1.5z" />
          </Control>
          <Control label="Zoom out">
            <path d="M10 13c-.75 0-1.5.75-1.5 1.5S9.25 16 10 16h9c.75 0 1.5-.75 1.5-1.5S19.75 13 19 13h-9z" />
          </Control>
          <Control label="Reset bearing to north">
            <path d="m10.5 14 4-8 4 8h-8z" />
            <path d="m10.5 16 4 8 4-8h-8z" fill="#ccc" />
          </Control>
        </div>
        <div className={group}>
          <Control label="Enter fullscreen">
            <path d="M24 16v5.5c0 1.75-.75 2.5-2.5 2.5H16v-1l3-1.5-4-5.5 1-1 5.5 4 1.5-3h1zM6 16l1.5 3 5.5-4 1 1-4 5.5 3 1.5v1H7.5C5.75 24 5 23.25 5 21.5V16h1zm7-11v1l-3 1.5 4 5.5-1 1-5.5-4L6 13H5V7.5C5 5.75 5.75 5 7.5 5H13zm11 2.5c0-1.75-.75-2.5-2.5-2.5H16v1l3 1.5-4 5.5 1 1 5.5-4 1.5 3h1V7.5z" />
          </Control>
        </div>
      </div>
      <div className="absolute bottom-5 left-5 h-11 w-[147px] border-4 border-t-0 border-[#333] bg-white/75 pl-2.5 text-xl leading-10 text-[#333]">3 km</div>
      <div className="absolute right-5 bottom-5 flex h-12 items-center rounded-full bg-white pl-4 text-[23px] text-[#404040]">
        <p className="pr-3">
          <a href="#">MapLibre</a> <span className="text-black">|</span> <a href="#">© MapTiler</a> <a href="#">© OpenStreetMap contributors</a>
        </p>
        <button type="button" aria-label="Toggle attribution" className="size-12 rounded-full bg-[#f2f2f2]">
          <svg viewBox="0 0 20 20" className="size-12" fill="#000" fillRule="evenodd" aria-hidden="true">
            <path d="M4 10a6 6 0 1 0 12 0 6 6 0 1 0-12 0m5-3a1 1 0 1 0 2 0 1 1 0 1 0-2 0m0 3a1 1 0 1 1 2 0v3a1 1 0 1 1-2 0" />
          </svg>
        </button>
      </div>
    </section>
  );
}

/* ---------- details ---------- */

function LongUrl({ parts }: { parts: string[] }) {
  return (
    <a href="#" className="block font-['DejaVu_Sans_Mono',monospace] text-[38px] underline decoration-2 underline-offset-4">
      {parts.map((p, i) => (
        <span key={i}>{i > 0 && <wbr />}{p}</span>
      ))}
    </a>
  );
}

const ROWS: [string, ReactNode][] = [
  ["Number of records", "10"],
  ["Number of fields supplied", "5/11 (45%)"],
  ["Number of fields matched", "1/11 (9%)"],
  ["Licence", "Open Government Licence"],
  ["Source documentation\u00a0 URL", <LongUrl parts={["https://www.borechester.gov.uk/", "planning/data/article-4-directions"]} />],
  ["Data URL", <LongUrl parts={["https://maps.borechester.gov.uk/", "arcgis/rest/services/PLANNING/", "A4D_CSB/MapServer/0/query?", "outFields=*&where=1%3D1&f=geojson"]} />],
  ["Data URL last accessed", "03:45 3 July 2024"],
  ["Data URL last updated", "03:42 28 June 2024"],
];

function Details() {
  return (
    <section className="col-span-2">
      <h2 className={H2}>Dataset details</h2>
      <dl className="mt-16 ml-0.5 leading-[50px]">
        {ROWS.map(([k, v]) => (
          <div key={k} className="flex border-b-2 border-[#b1b4b6] pt-4 pb-[22px]">
            <dt className="w-[400px] shrink-0 pr-10 text-[38px] font-bold">{k}</dt>
            <dd className="min-w-0 flex-1 text-[37px]">{v}</dd>
          </div>
        ))}
      </dl>
    </section>
  );
}

function Actions() {
  return (
    <aside className="pl-0.5">
      <h2 className={H2}>Dataset actions</h2>
      <ul className="mt-[46px] flex flex-col gap-2.5 text-[37px] leading-[50px] text-[#1d70b8]">
        {["Check brownfield land dataset", "Brownfield land guidance"].map((t) => (
          <li key={t}><a href="#" className="underline decoration-2 underline-offset-[6px]">{t}</a></li>
        ))}
      </ul>
    </aside>
  );
}

export default function App() {
  return (
    <div className="min-h-screen bg-white font-[Roboto,'Liberation_Sans',sans-serif] text-[#0b0c0c]">
      <Header />
      <main className={`pb-40 ${WRAP}`}>
        <Breadcrumbs />
        <p className="mt-[102px] text-[54px] leading-[60px] text-[#505a5f]">Borchester District Council</p>
        <h1 className="mt-3 text-[97px] leading-[100px] font-bold">Brownfield land</h1>
        <Tabs />
        <MapPanel />
        <div className="mt-[58px] grid grid-cols-3 gap-[60px]">
          <Details />
          <Actions />
        </div>
      </main>
    </div>
  );
}
